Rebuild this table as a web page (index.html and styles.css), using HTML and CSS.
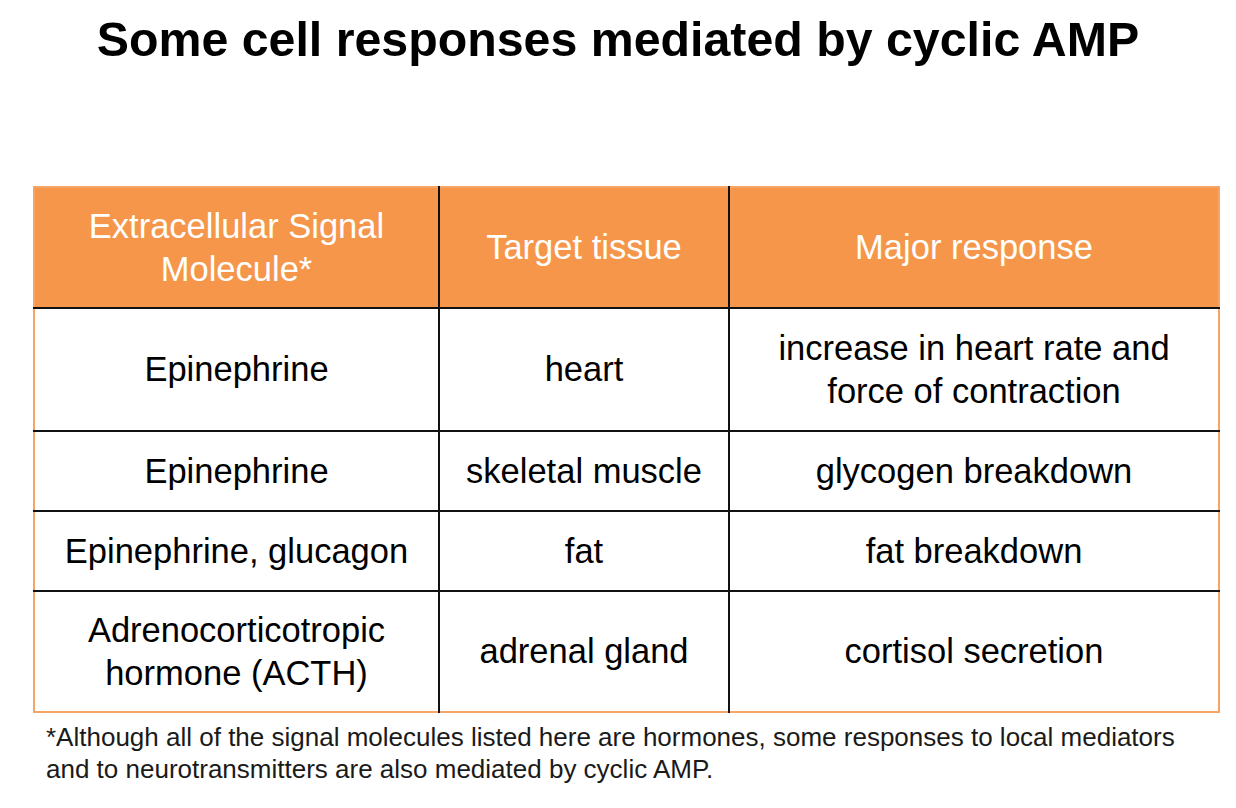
FILE: index.html
```html
<!DOCTYPE html>
<html>
<head>
<meta charset="utf-8">
<link rel="stylesheet" href="styles.css">
</head>
<body>
<div class="page">
  <h1 class="title">Some cell responses mediated by cyclic AMP</h1>
  <table class="grid">
    <colgroup>
      <col class="c1"><col class="c2"><col class="c3">
    </colgroup>
    <thead>
      <tr class="head">
        <th>Extracellular Signal<br>Molecule*</th>
        <th>Target tissue</th>
        <th>Major response</th>
      </tr>
    </thead>
    <tbody>
      <tr class="tall">
        <td>Epinephrine</td>
        <td>heart</td>
        <td>increase in heart rate and<br>force of contraction</td>
      </tr>
      <tr class="short">
        <td>Epinephrine</td>
        <td>skeletal muscle</td>
        <td>glycogen breakdown</td>
      </tr>
      <tr class="short">
        <td>Epinephrine, glucagon</td>
        <td>fat</td>
        <td>fat breakdown</td>
      </tr>
      <tr class="last">
        <td>Adrenocorticotropic<br>hormone (ACTH)</td>
        <td>adrenal gland</td>
        <td>cortisol secretion</td>
      </tr>
    </tbody>
  </table>
  <p class="note">*Although all of the signal molecules listed here are hormones, some responses to local mediators<br>and to neurotransmitters are also mediated by cyclic AMP.</p>
</div>
</body>
</html>
```

FILE: styles.css
```css
html, body {
  margin: 0;
  padding: 0;
  background: #ffffff;
}
body {
  font-family: "Liberation Sans", Arial, sans-serif;
  color: #000;
}
.page {
  width: 1236px;
  height: 808px;
  padding-top: 11px;
  box-sizing: border-box;
}
.title {
  margin: 0;
  text-align: center;
  font-size: 48.3px;
  line-height: 56px;
  font-weight: 700;
  letter-spacing: 0;
}
.grid {
  margin: 119px 0 0 33px;
  width: 1185px;
  border-collapse: collapse;
  table-layout: fixed;
  border: 2px solid #f8a464;
}
.c1 { width: 405px; }
.c2 { width: 290px; }
.c3 { width: 490px; }
.grid th, .grid td {
  text-align: center;
  vertical-align: middle;
  font-size: 34.5px;
  line-height: 43px;
  font-weight: 400;
  padding: 0;
  border-left: 2px solid #111;
  border-top: 2px solid #111;
}
.grid tr > :first-child {
  border-left: none;
}
.head th {
  background: #f6964a;
  color: #ffffff;
  height: 119px;
  border-top: none;
}
.tall td { height: 121px; }
.short td { height: 78px; }
.last td { height: 119px; }
.note {
  margin: 8px 0 0 46px;
  font-size: 26px;
  line-height: 32px;
  color: #1a1a1a;
}
```
